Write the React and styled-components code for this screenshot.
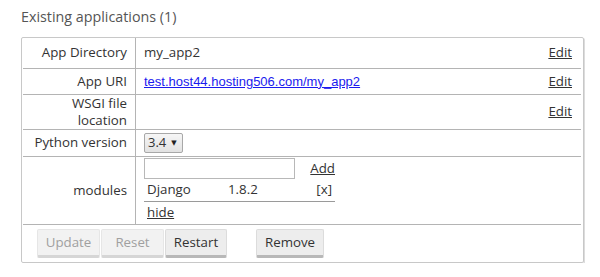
import styled, { createGlobalStyle } from "styled-components";

// Global page reset
const GlobalStyle = createGlobalStyle`
  body {
    margin: 0;
    background: #ffffff;
    font-family: "Open Sans", "DejaVu Sans", sans-serif;
    color: #333;
  }
`;

export default function App() {
  return (
    <>
      <GlobalStyle />
      <Page>
        <Title>Existing applications (1)</Title>
        <Box>
          <AppTable>
            <tbody>
              <Row $height={30}>
                <Label>App Directory</Label>
                <Value>my_app2</Value>
                <EditCell>
                  <TextLink href="#">Edit</TextLink>
                </EditCell>
              </Row>
              <Row $height={26}>
                <Label>App URI</Label>
                <Value>
                  <UriLink href="#">test.host44.hosting506.com/my_app2</UriLink>
                </Value>
                <EditCell>
                  <TextLink href="#">Edit</TextLink>
                </EditCell>
              </Row>
              <Row $height={33}>
                <Label>
                  WSGI file
                  <br />
                  location
                </Label>
                <Value></Value>
                <EditCell>
                  <TextLink href="#">Edit</TextLink>
                </EditCell>
              </Row>
              <Row $height={27}>
                <Label>Python version</Label>
                <Value colSpan={2}>
                  <Select>
                    3.4 <Caret>▼</Caret>
                  </Select>
                </Value>
              </Row>
              <Row $height={67}>
                <Label>modules</Label>
                <Value colSpan={2}>
                  <ModulesBox>
                    <AddLine>
                      <ModuleInput />
                      <TextLink href="#">Add</TextLink>
                    </AddLine>
                    <ModuleRow>
                      <ModName>Django</ModName>
                      <ModVersion>1.8.2</ModVersion>
                      <ModRemove>[x]</ModRemove>
                    </ModuleRow>
                    <HideLink href="#">hide</HideLink>
                  </ModulesBox>
                </Value>
              </Row>
            </tbody>
          </AppTable>
          <Actions>
            <Button disabled $width={63}>Update</Button>
            <Button disabled $width={63}>Reset</Button>
            <Button $width={62}>Restart</Button>
            <Spacer />
            <Button $width={68}>Remove</Button>
          </Actions>
        </Box>
      </Page>
    </>
  );
}

// Styled components

const Page = styled.div`
  padding: 7px 0 0 21px;
  width: 563px;
`;

const Title = styled.h3`
  margin: 0 0 11px 0;
  font-size: 14.3px;
  font-weight: normal;
  line-height: 19px;
  color: #555;
`;

const Box = styled.div`
  border: 1px solid #c8c8c8;
  border-radius: 2px;
  box-shadow: 1px 1px 0 #dcdcdc;
  padding: 0 2px 4px 1px;
  box-sizing: border-box;
  width: 563px;
`;

const AppTable = styled.table`
  width: 100%;
  border-collapse: collapse;
  font-size: 13.3px;
  line-height: 17px;
`;

const Row = styled.tr`
  height: ${(p) => p.$height}px;
  border-bottom: 1px solid #b4b4b4;
`;

const Label = styled.td`
  width: 104px;
  padding: 0 8px 0 0;
  text-align: right;
  border-right: 1px solid #b4b4b4;
  color: #333;
  vertical-align: middle;
`;

const Value = styled.td`
  padding: 0 0 0 8px;
  vertical-align: middle;
  color: #333;
`;

const EditCell = styled.td`
  width: 40px;
  padding: 0 9px 0 0;
  text-align: right;
  vertical-align: middle;
`;

const TextLink = styled.a`
  color: #333;
  text-decoration: underline;
`;

const UriLink = styled.a`
  font-family: "Liberation Sans", Arial, sans-serif;
  font-size: 13px;
  color: #1a1aee;
  text-decoration: underline;
`;

const Select = styled.div`
  display: inline-flex;
  align-items: center;
  gap: 5px;
  height: 18px;
  padding: 0 5px 0 3px;
  border: 1px solid #a8a8a8;
  border-radius: 2px;
  background: linear-gradient(#f6f6f6, #e2e2e2);
  font-size: 13px;
  color: #333;
  vertical-align: middle;
`;

const Caret = styled.span`
  font-size: 7px;
  color: #222;
`;

const ModulesBox = styled.div`
  display: flex;
  flex-direction: column;
  width: 191px;
  padding: 1px 0 1px;
`;

const AddLine = styled.div`
  display: flex;
  align-items: center;
  justify-content: space-between;
  height: 21px;
`;

const ModuleInput = styled.input`
  width: 151px;
  height: 21px;
  box-sizing: border-box;
  border: 1px solid #b8b8b8;
  padding: 0;
  margin: 0;
`;

const ModuleRow = styled.div`
  display: flex;
  align-items: center;
  height: 22px;
  padding: 0 0 0 3px;
  border-bottom: 1px solid #9a9a9a;
`;

const ModName = styled.span`
  width: 81px;
`;

const ModVersion = styled.span`
  flex: 1;
`;

const ModRemove = styled.span`
  padding-right: 3px;
`;

const HideLink = styled(TextLink)`
  margin: 0 0 0 3px;
  line-height: 21px;
  align-self: flex-start;
`;

const Actions = styled.div`
  display: flex;
  align-items: flex-start;
  gap: 1px;
  padding: 4px 0 0 14px;
`;

const Spacer = styled.div`
  width: 27px;
`;

const Button = styled.button`
  width: ${(p) => p.$width}px;
  height: 29px;
  padding: 0;
  margin: 0;
  font-family: "Open Sans", "DejaVu Sans", sans-serif;
  font-size: 13.3px;
  color: ${(p) => (p.disabled ? "#a0a0a0" : "#333")};
  background: ${(p) => (p.disabled ? "#f2f2f2" : "#ededed")};
  border: 1px solid ${(p) => (p.disabled ? "#e6e6e6" : "#dcdcdc")};
  border-bottom: 3px solid ${(p) => (p.disabled ? "#d6d6d6" : "#b8b8b8")};
  border-radius: 2px;
  box-sizing: border-box;
`;
